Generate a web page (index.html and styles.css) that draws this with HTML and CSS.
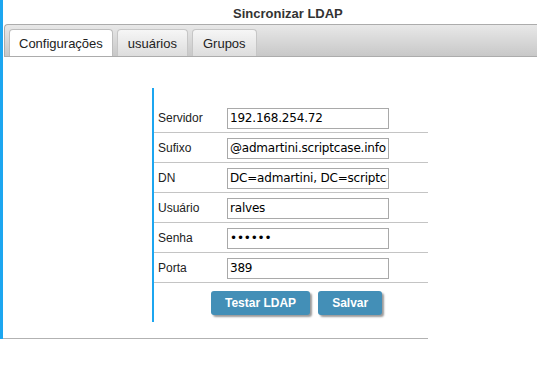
FILE: index.html
```html
<!DOCTYPE html>
<html lang="pt">

<head>
    <meta charset="UTF-8">
    <meta name="viewport" content="width=device-width, initial-scale=1.0">
    <title>Sincronizar LDAP</title>
    <link rel="stylesheet" href="styles.css">
</head>

<body>

    <div class="frame">
        <div class="title">Sincronizar LDAP</div>

        <div class="tabbar">
            <div class="tab tab-active">Configurações</div>
            <div class="tab">usuários</div>
            <div class="tab">Grupos</div>
        </div>

        <div class="panel">
            <form class="ldap-form">
                <div class="row">
                    <label for="servidor">Servidor</label>
                    <input type="text" id="servidor" value="192.168.254.72">
                </div>
                <div class="row">
                    <label for="sufixo">Sufixo</label>
                    <input type="text" id="sufixo" value="@admartini.scriptcase.info">
                </div>
                <div class="row">
                    <label for="dn">DN</label>
                    <input type="text" id="dn" value="DC=admartini, DC=scriptcase, DC=info">
                </div>
                <div class="row">
                    <label for="usuario">Usuário</label>
                    <input type="text" id="usuario" value="ralves">
                </div>
                <div class="row">
                    <label for="senha">Senha</label>
                    <input type="password" id="senha" value="123456">
                </div>
                <div class="row">
                    <label for="porta">Porta</label>
                    <input type="text" id="porta" value="389">
                </div>
                <div class="buttons">
                    <button type="button">Testar LDAP</button>
                    <button type="submit">Salvar</button>
                </div>
            </form>
        </div>

        <div class="rule"></div>
    </div>

</body>

</html>
```

FILE: styles.css
```css
body {
    font-family: 'Liberation Sans', Arial, sans-serif;
    margin: 0;
    padding: 0;
    background-color: #fff;
    color: #222;
}

.frame {
    border-left: 3px solid #1ca6f0;
}

.title {
    padding: 6px 0 0 230px;
    font-size: 13px;
    font-weight: bold;
    line-height: 16px;
    color: #333;
    margin-bottom: 2px;
}

.tabbar {
    display: flex;
    align-items: flex-end;
    gap: 4px;
    margin-left: 1px;
    height: 31px;
    padding-left: 4px;
    border: 1px solid #acacac;
    border-right: none;
    border-radius: 4px 0 0 0;
    background: linear-gradient(#e8e8e8, #c8c8c8);
}

.tab {
    height: 27px;
    padding: 6px 10px 0;
    box-sizing: border-box;
    font-size: 13px;
    line-height: 15px;
    color: #222;
    border: 1px solid #c6c6c6;
    border-bottom: none;
    border-radius: 4px 4px 0 0;
    background: linear-gradient(#f6f6f6, #dddddd);
}

.tab-active {
    padding: 6px 9px 0;
    background: #fff;
    border-color: #bdbdbd;
}

.panel {
    margin: 31px 0 0 149px;
    width: 274px;
    border-left: 2px solid #1ca6f0;
    padding-top: 15px;
}

.row {
    display: flex;
    align-items: center;
    height: 29px;
    border-bottom: 1px solid #c4c4c4;
}

.row label {
    width: 69px;
    padding-left: 4px;
    font-size: 12px;
    color: #222;
}

.row input {
    width: 162px;
    height: 21px;
    box-sizing: border-box;
    margin: 1px 0 0;
    padding: 0 1px 0 2px;
    border: 1px solid #a9a9a9;
    border-radius: 0;
    font-family: 'DejaVu Sans', Verdana, sans-serif;
    font-size: 12px;
    letter-spacing: -0.2px;
    color: #000;
    outline: none;
}

.buttons {
    display: flex;
    gap: 8px;
    padding: 8px 0 7px 57px;
}

.buttons button {
    height: 24px;
    padding: 0 14px;
    border: none;
    border-radius: 3px;
    background-color: #438fb7;
    color: #fff;
    font-family: 'Liberation Sans', Arial, sans-serif;
    font-size: 12px;
    font-weight: bold;
    box-shadow: 2px 2px 2px rgba(0, 0, 0, 0.4);
    cursor: pointer;
}

.rule {
    width: 425px;
    height: 1px;
    margin-top: 16px;
    background-color: #b2b2b2;
}
```
